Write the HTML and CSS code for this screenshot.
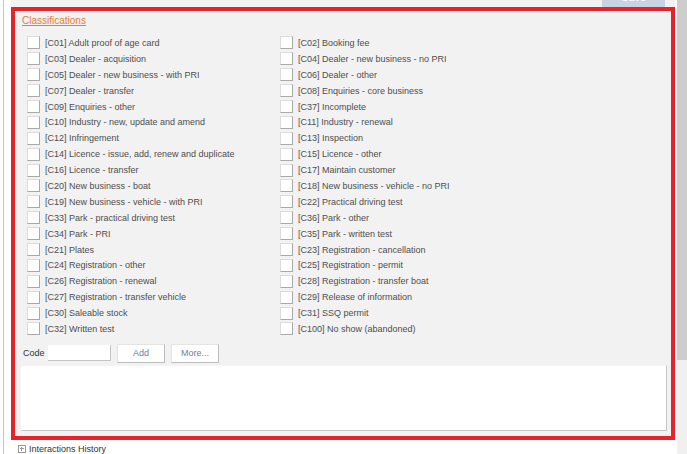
FILE: index.html
```html
<!DOCTYPE html>
<html>
<head>
<meta charset="utf-8">
<link rel="stylesheet" href="styles.css">
</head>
<body>
<div class="page">
  <div class="main">
    <div class="topbar"><button class="save">Save</button></div>
    <section class="classif">
      <div class="heading"><a class="title">Classifications</a></div>
      <div class="grid">
        <label class="item"><span class="box"></span>[C01] Adult proof of age card</label>
        <label class="item"><span class="box"></span>[C02] Booking fee</label>
        <label class="item"><span class="box"></span>[C03] Dealer - acquisition</label>
        <label class="item"><span class="box"></span>[C04] Dealer - new business - no PRI</label>
        <label class="item"><span class="box"></span>[C05] Dealer - new business - with PRI</label>
        <label class="item"><span class="box"></span>[C06] Dealer - other</label>
        <label class="item"><span class="box"></span>[C07] Dealer - transfer</label>
        <label class="item"><span class="box"></span>[C08] Enquiries - core business</label>
        <label class="item"><span class="box"></span>[C09] Enquiries - other</label>
        <label class="item"><span class="box"></span>[C37] Incomplete</label>
        <label class="item"><span class="box"></span>[C10] Industry - new, update and amend</label>
        <label class="item"><span class="box"></span>[C11] Industry - renewal</label>
        <label class="item"><span class="box"></span>[C12] Infringement</label>
        <label class="item"><span class="box"></span>[C13] Inspection</label>
        <label class="item"><span class="box"></span>[C14] Licence - issue, add, renew and duplicate</label>
        <label class="item"><span class="box"></span>[C15] Licence - other</label>
        <label class="item"><span class="box"></span>[C16] Licence - transfer</label>
        <label class="item"><span class="box"></span>[C17] Maintain customer</label>
        <label class="item"><span class="box"></span>[C20] New business - boat</label>
        <label class="item"><span class="box"></span>[C18] New business - vehicle - no PRI</label>
        <label class="item"><span class="box"></span>[C19] New business - vehicle - with PRI</label>
        <label class="item"><span class="box"></span>[C22] Practical driving test</label>
        <label class="item"><span class="box"></span>[C33] Park - practical driving test</label>
        <label class="item"><span class="box"></span>[C36] Park - other</label>
        <label class="item"><span class="box"></span>[C34] Park - PRI</label>
        <label class="item"><span class="box"></span>[C35] Park - written test</label>
        <label class="item"><span class="box"></span>[C21] Plates</label>
        <label class="item"><span class="box"></span>[C23] Registration - cancellation</label>
        <label class="item"><span class="box"></span>[C24] Registration - other</label>
        <label class="item"><span class="box"></span>[C25] Registration - permit</label>
        <label class="item"><span class="box"></span>[C26] Registration - renewal</label>
        <label class="item"><span class="box"></span>[C28] Registration - transfer boat</label>
        <label class="item"><span class="box"></span>[C27] Registration - transfer vehicle</label>
        <label class="item"><span class="box"></span>[C29] Release of information</label>
        <label class="item"><span class="box"></span>[C30] Saleable stock</label>
        <label class="item"><span class="box"></span>[C31] SSQ permit</label>
        <label class="item"><span class="box"></span>[C32] Written test</label>
        <label class="item"><span class="box"></span>[C100] No show (abandoned)</label>
      </div>
      <div class="coderow">
        <span class="codelabel">Code</span>
        <span class="codeinput"></span>
        <button class="btn">Add</button>
        <button class="btn">More...</button>
      </div>
      <div class="notes"></div>
    </section>
    <div class="history"><span class="expand"></span>Interactions History</div>
  </div>
  <div class="scrollbar"><div class="thumb"></div></div>
</div>
</body>
</html>
```
FILE: styles.css
```css
html, body {
  margin: 0;
  padding: 0;
  background: #fff;
  font-family: "Liberation Sans", Arial, sans-serif;
}
.page {
  display: flex;
  width: 687px;
  height: 454px;
  overflow: hidden;
}
.main {
  margin-left: 3px;
  border-left: 1px solid #c8c8c8;
  padding-left: 7px;
  width: 665px;
  padding-right: 1px;
}
.topbar {
  height: 7px;
  background: #f2f2f2;
  display: flex;
  justify-content: flex-end;
  align-items: flex-end;
  overflow: hidden;
}
.save {
  width: 63px;
  height: 20px;
  margin-right: 10px;
  border: 0;
  padding: 0;
  background: #c9d4e2;
  color: #fff;
  font-family: inherit;
  font-size: 11px;
  line-height: 20px;
  flex: none;
}
.classif {
  border: 4px solid #e8212b;
  background: #f2f2f2;
  height: 425px;
  display: flex;
  flex-direction: column;
}
.heading {
  padding: 2px 0 0 7px;
  height: 12px;
  line-height: 12px;
}
.title {
  font-size: 10px;
  color: #e47c3a;
  text-decoration: underline;
}
.grid {
  margin-top: 10px;
  padding-left: 12px;
  display: grid;
  grid-template-columns: 253px 1fr;
  grid-auto-rows: 15.9px;
}
.item {
  display: flex;
  align-items: center;
  font-size: 9px;
  color: #4e4e4e;
  white-space: nowrap;
}
.box {
  width: 11px;
  height: 11px;
  background: #fff;
  border: 1px solid #dcdcdc;
  border-right-color: #a9a9a9;
  border-bottom-color: #a9a9a9;
  margin-right: 5px;
  flex: none;
}
.coderow {
  margin-top: 7px;
  padding-left: 8px;
  height: 19px;
  display: flex;
  align-items: center;
}
.codelabel {
  font-size: 9px;
  color: #333;
  width: 25px;
}
.codeinput {
  width: 62px;
  height: 15px;
  background: #fff;
  border-right: 1px solid #c4c4c4;
  border-bottom: 1px solid #c4c4c4;
  margin-right: 6px;
}
.btn {
  width: 48px;
  height: 19px;
  margin-right: 6px;
  padding: 0;
  background: #fff;
  border: 1px solid #e4e4e4;
  border-right-color: #bdbdbd;
  border-bottom-color: #bdbdbd;
  color: #6a7ea6;
  font-family: inherit;
  font-size: 9px;
}
.notes {
  margin: 2px 4px 0 6px;
  height: 64px;
  background: #fff;
  border-top: 1px solid #f4f4f4;
  border-right: 1px solid #c6c6c6;
  border-bottom: 1px solid #c6c6c6;
}
.history {
  margin-top: 3px;
  padding-left: 7px;
  height: 12px;
  display: flex;
  align-items: center;
  font-size: 9px;
  color: #333;
}
.expand {
  width: 6px;
  height: 6px;
  border: 1px solid #999;
  margin-right: 3px;
  position: relative;
}
.expand::before {
  content: "";
  position: absolute;
  left: 1px;
  top: 2px;
  width: 4px;
  height: 1px;
  background: #999;
}
.expand::after {
  content: "";
  position: absolute;
  left: 2px;
  top: 1px;
  width: 1px;
  height: 4px;
  background: #999;
}
.scrollbar {
  margin-left: 1px;
  width: 10px;
  background: #f0f0f0;
  flex: none;
}
.thumb {
  height: 360px;
  background: #cdcdcd;
}
```
